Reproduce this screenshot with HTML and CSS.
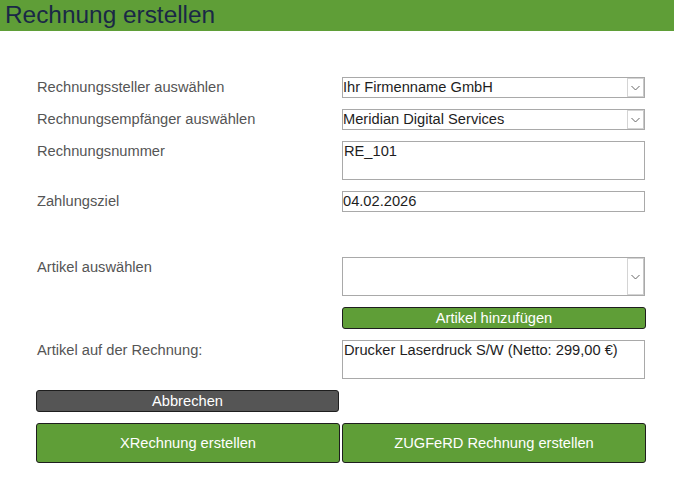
FILE: index.html
```html
<!DOCTYPE html>
<html lang="de">
<head>
<meta charset="utf-8">
<title>Rechnung erstellen</title>
<link rel="stylesheet" href="styles.css">
</head>
<body>
<header class="bar"><h1 class="title">Rechnung erstellen</h1></header>
<form class="form">
  <label class="label">Rechnungssteller auswählen</label>
  <div class="select">
    <span class="select-value">Ihr Firmenname GmbH</span>
    <span class="arrow"><svg width="9" height="6" viewBox="0 0 9 6"><path d="M0.5 1 L4.5 5 L8.5 1" fill="none" stroke="#666" stroke-width="1"/></svg></span>
  </div>

  <label class="label">Rechnungsempfänger auswählen</label>
  <div class="select">
    <span class="select-value">Meridian Digital Services</span>
    <span class="arrow"><svg width="9" height="6" viewBox="0 0 9 6"><path d="M0.5 1 L4.5 5 L8.5 1" fill="none" stroke="#666" stroke-width="1"/></svg></span>
  </div>

  <label class="label">Rechnungsnummer</label>
  <div class="textarea">RE_101</div>

  <label class="label">Zahlungsziel</label>
  <div class="input">04.02.2026</div>

  <div class="spacer"></div>
  <div class="spacer"></div>

  <label class="label">Artikel auswählen</label>
  <div class="select tall">
    <span class="select-value"></span>
    <span class="arrow"><svg width="9" height="6" viewBox="0 0 9 6"><path d="M0.5 1 L4.5 5 L8.5 1" fill="none" stroke="#666" stroke-width="1"/></svg></span>
  </div>

  <div class="empty"></div>
  <button type="button" class="btn btn-green btn-small">Artikel hinzufügen</button>

  <label class="label">Artikel auf der Rechnung:</label>
  <div class="textarea">Drucker Laserdruck S/W (Netto: 299,00 €)</div>

  <button type="button" class="btn btn-gray btn-small">Abbrechen</button>
  <div class="empty"></div>

  <button type="button" class="btn btn-green btn-big">XRechnung erstellen</button>
  <button type="button" class="btn btn-green btn-big">ZUGFeRD Rechnung erstellen</button>
</form>
</body>
</html>
```
FILE: styles.css
```css
* { box-sizing: border-box; }
html, body {
  margin: 0;
  padding: 0;
  background: #fff;
  font-family: "Liberation Sans", Arial, sans-serif;
}
.bar {
  background: #5f9e37;
  height: 31px;
  padding: 0 0 0 5px;
}
.title {
  margin: 0;
  font-size: 24.4px;
  font-weight: normal;
  line-height: 29px;
  color: #1a2846;
}
.form {
  display: grid;
  grid-template-columns: 303px 304px;
  column-gap: 3px;
  row-gap: 11px;
  margin: 46px 0 0 36px;
}
.label {
  font-size: 14.667px;
  line-height: 20px;
  color: #555;
  padding-left: 1px;
}
.select {
  display: flex;
  align-items: stretch;
  height: 21px;
  border: 1px solid #a9a9a9;
  background: #fff;
  width: 303px;
}
.select.tall { height: 39px; }
.select-value {
  flex: 1;
  font-size: 14.667px;
  line-height: 19px;
  color: #1e1e1e;
  white-space: nowrap;
}
.arrow {
  width: 17px;
  border: 1px solid #d4d4d4;
  border-right-color: #c8c8c8;
  display: flex;
  align-items: center;
  justify-content: center;
  background: #fff;
}
.textarea {
  height: 39px;
  width: 303px;
  border: 1px solid #a9a9a9;
  font-size: 14.667px;
  line-height: 17px;
  color: #1e1e1e;
  padding: 1px 1px;
}
.input {
  height: 21px;
  width: 303px;
  border: 1px solid #a9a9a9;
  font-size: 14.667px;
  line-height: 19px;
  color: #1e1e1e;
  padding: 0;
}
.spacer { height: 23px; }
.btn {
  font-family: "Liberation Sans", Arial, sans-serif;
  font-size: 14.667px;
  color: #fff;
  border: 1px solid #1e1e1e;
  border-radius: 3px;
  padding: 0;
  margin: 0;
  width: 304px;
  cursor: pointer;
}
.btn-small { height: 22px; line-height: 20px; }
.btn-big { height: 40px; }
.btn-green { background: #5f9e37; }
.btn-gray { background: #555; width: 303px; }
```
